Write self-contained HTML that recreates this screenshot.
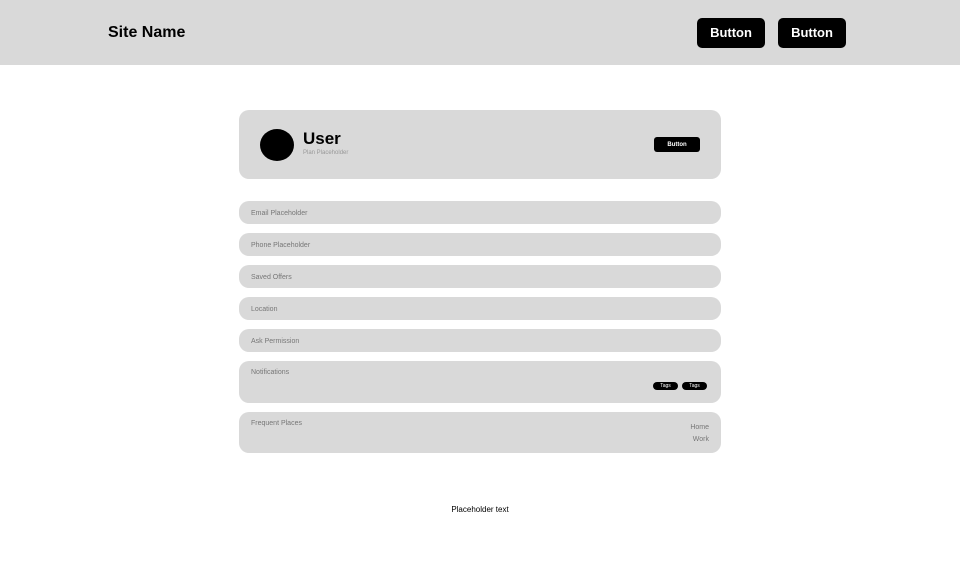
<!DOCTYPE html>
<html><head><style>
*{margin:0;padding:0;box-sizing:border-box}
body{width:960px;height:565px;background:#fff;font-family:"Liberation Sans",sans-serif;position:relative;overflow:hidden}
.hdr{position:absolute;left:0;top:0;width:960px;height:65px;background:#d9d9d9}
.site{position:absolute;left:108px;top:24px;font-size:16px;font-weight:bold;color:#000}
.hb{position:absolute;top:18px;width:68px;height:30px;background:#000;color:#fff;border-radius:5px;font-size:13px;font-weight:bold;text-align:center;line-height:30px}
.box{position:absolute;left:239px;width:482px;background:#d9d9d9;border-radius:10px}
.lbl{position:absolute;left:12px;font-size:7px;color:#777}
.tag{position:absolute;top:21px;width:25px;height:8px;background:#000;color:#fff;border-radius:4px;font-size:5px;text-align:center;line-height:8px}
</style></head><body>
<div class="hdr">
<div class="site">Site Name</div>
<div class="hb" style="left:697px">Button</div>
<div class="hb" style="left:778px">Button</div>
</div>
<div class="box" style="top:110px;height:69px">
<div style="position:absolute;left:21px;top:19px;width:34px;height:32px;border-radius:50%;background:#000"></div>
<div style="position:absolute;left:64px;top:19px;font-size:17px;font-weight:bold">User</div>
<div style="position:absolute;left:64px;top:40px;font-size:6px;color:#999">Plan Placeholder</div>
<div style="position:absolute;left:415px;top:27px;width:46px;height:15px;background:#000;color:#fff;border-radius:3px;font-size:6px;font-weight:bold;text-align:center;line-height:16px">Button</div>
</div>
<div class="box" style="top:201px;height:23px"><div class="lbl" style="top:9px">Email Placeholder</div></div>
<div class="box" style="top:233px;height:23px"><div class="lbl" style="top:9px">Phone Placeholder</div></div>
<div class="box" style="top:265px;height:23px"><div class="lbl" style="top:9px">Saved Offers</div></div>
<div class="box" style="top:297px;height:23px"><div class="lbl" style="top:9px">Location</div></div>
<div class="box" style="top:329px;height:23px"><div class="lbl" style="top:9px">Ask Permission</div></div>
<div class="box" style="top:361px;height:42px"><div class="lbl" style="top:8px">Notifications</div>
<div class="tag" style="left:414px">Tags</div><div class="tag" style="left:443px">Tags</div></div>
<div class="box" style="top:412px;height:41px"><div class="lbl" style="top:8px">Frequent Places</div>
<div style="position:absolute;right:12px;top:10px;font-size:7px;color:#777;text-align:right;line-height:12px">Home<br>Work</div></div>
<div style="position:absolute;left:0;width:960px;top:505px;text-align:center;font-size:8px;color:#000">Placeholder text</div>
</body></html>
